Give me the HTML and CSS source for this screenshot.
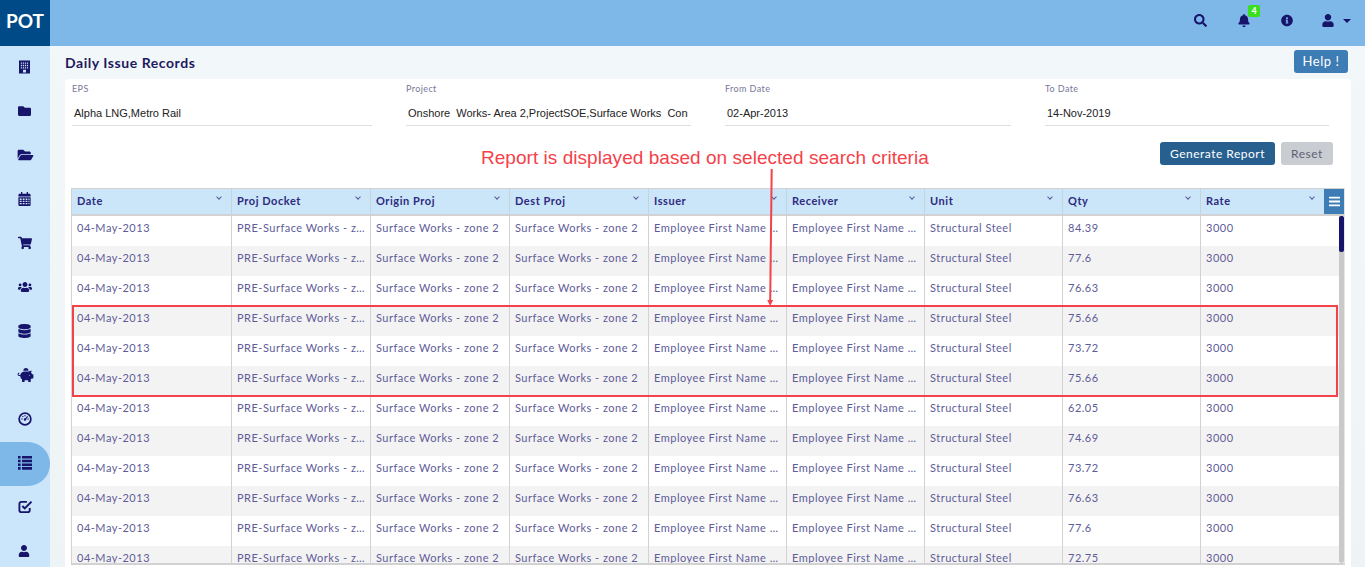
FILE: index.html
```html
<!DOCTYPE html>
<html lang="en">
<head>
<meta charset="utf-8">
<title>Daily Issue Records</title>
<link rel="stylesheet" href="styles.css">
</head>
<body>
<div class="app">
  <aside class="sidebar">
    <div class="logo">POT</div>
    <nav class="nav">
      <a class="nav-item"><svg class="ico ico-building" viewBox="0 0 12 14"><path fill-rule="evenodd" d="M0 0h12v14H0zM2 2v1.5h1.3V2zm2.2 0v1.5h1.3V2zm2.2 0v1.5h1.3V2zm2.2 0v1.5H10V2zM2 4.6v1.5h1.3V4.6zm2.2 0v1.5h1.3V4.6zm2.2 0v1.5h1.3V4.6zm2.2 0v1.5H10V4.6zM2 7.2v1.5h1.3V7.2zm2.2 0v1.5h1.3V7.2zm2.2 0v1.5h1.3V7.2zm2.2 0v1.5H10V7.2zM4.4 10v3h3.2v-3z"/></svg></a>
      <a class="nav-item"><svg class="ico" viewBox="0 0 512 512"><path d="M464 128H272l-64-64H48C21.49 64 0 85.49 0 112v288c0 26.51 21.49 48 48 48h416c26.51 0 48-21.49 48-48V176c0-26.51-21.49-48-48-48z"/></svg></a>
      <a class="nav-item"><svg class="ico ico-wide" viewBox="0 0 576 512"><path d="M572.694 292.093L500.27 416.248A63.997 63.997 0 0 1 444.989 448H45.025c-18.523 0-30.064-20.093-20.731-36.093l72.424-124.155A64 64 0 0 1 152 256h399.964c18.523 0 30.064 20.093 20.73 36.093zM152 224h328v-48c0-26.51-21.49-48-48-48H272l-64-64H48C21.49 64 0 85.49 0 112v278.046l69.077-118.418C86.214 242.25 117.989 224 152 224z"/></svg></a>
      <a class="nav-item"><svg class="ico" viewBox="0 0 448 512"><path fill-rule="evenodd" d="M96 0h48v64h160V0h48v64h48c26 0 48 22 48 48v48H0v-48c0-26 22-48 48-48h48zM0 192h448v272c0 26-22 48-48 48H48c-26 0-48-22-48-48zm48 48v48h72v-48zm112 0v48h64v-48zm104 0v48h64v-48zm104 0v48h40v-48zM48 320v48h72v-48zm112 0v48h64v-48zm104 0v48h64v-48zm104 0v48h40v-48zM48 400v48h72v-48zm112 0v48h64v-48zm104 0v48h64v-48zm104 0v48h40v-48z"/></svg></a>
      <a class="nav-item"><svg class="ico ico-14" viewBox="0 0 576 512"><path d="M528.12 301.319l47.273-208C578.806 78.301 567.391 64 551.99 64H159.208l-9.166-44.81C147.758 8.021 137.93 0 126.529 0H24C10.745 0 0 10.745 0 24v16c0 13.255 10.745 24 24 24h69.883l70.248 343.435C147.325 417.1 136 435.222 136 456c0 30.928 25.072 56 56 56s56-25.072 56-56c0-15.674-6.447-29.835-16.824-40h209.647C430.447 426.165 424 440.326 424 456c0 30.928 25.072 56 56 56s56-25.072 56-56c0-22.172-12.888-41.332-31.579-50.405l5.517-24.276c3.413-15.018-8.002-29.319-23.403-29.319H218.117l-6.545-32h293.145c11.206 0 20.92-7.754 23.403-18.681z"/></svg></a>
      <a class="nav-item"><svg class="ico ico-14" viewBox="0 0 640 512"><path d="M96 224c35.3 0 64-28.7 64-64s-28.7-64-64-64-64 28.7-64 64 28.7 64 64 64zm448 0c35.3 0 64-28.7 64-64s-28.7-64-64-64-64 28.7-64 64 28.7 64 64 64zm32 32h-64c-17.6 0-33.5 7.1-45.1 18.6 40.3 22.1 68.9 62 75.1 109.4h66c17.7 0 32-14.3 32-32v-32c0-35.3-28.7-64-64-64zm-256 0c61.9 0 112-50.1 112-112S381.9 32 320 32 208 82.1 208 144s50.1 112 112 112zm76.8 32h-8.3c-20.8 10-43.9 16-68.5 16s-47.6-6-68.5-16h-8.3C179.6 288 128 339.6 128 403.2V432c0 26.5 21.5 48 48 48h288c26.5 0 48-21.5 48-48v-28.8c0-63.6-51.6-115.2-115.2-115.2zm-223.7-13.4C161.5 263.1 145.6 256 128 256H64c-35.3 0-64 28.7-64 64v32c0 17.7 14.3 32 32 32h65.9c6.3-47.4 34.9-87.3 75.2-109.4z"/></svg></a>
      <a class="nav-item"><svg class="ico" viewBox="0 0 448 512"><path d="M448 73.143v45.714C448 159.143 347.667 192 224 192S0 159.143 0 118.857V73.143C0 32.857 100.333 0 224 0s224 32.857 224 73.143zM448 176v102.857C448 319.143 347.667 352 224 352S0 319.143 0 278.857V176c48.125 33.143 136.208 48.572 224 48.572S399.874 209.143 448 176zm0 160v102.857C448 479.143 347.667 512 224 512S0 479.143 0 438.857V336c48.125 33.143 136.208 48.572 224 48.572S399.874 369.143 448 336z"/></svg></a>
      <a class="nav-item"><svg class="ico ico-wide" viewBox="0 0 576 512"><path d="M560 224h-29.5c-8.8-20-21.6-37.7-37.4-52.5L512 96h-32c-29.4 0-55.4 13.5-73 34.3-7.6-1.1-15.1-2.3-23-2.3H256c-77.4 0-141.9 55-156.8 128H56c-14.8 0-26.5-13.5-23.5-28.8C34.7 215.8 45.4 208 57 208h1c3.3 0 6-2.7 6-6v-20c0-3.3-2.7-6-6-6-28.5 0-53.9 20.4-57.5 48.6C-3.9 258.8 22.7 288 56 288h40c0 52.2 25.4 98.1 64 127.3V496c0 8.8 7.2 16 16 16h64c8.8 0 16-7.2 16-16v-48h128v48c0 8.8 7.2 16 16 16h64c8.8 0 16-7.2 16-16v-80.7c11.8-8.9 22.3-19.4 31.3-31.3H560c8.8 0 16-7.2 16-16V240c0-8.8-7.2-16-16-16zm-128 64c-8.8 0-16-7.2-16-16s7.2-16 16-16 16 7.2 16 16-7.2 16-16 16zM256 96h128c5.4 0 10.7.4 15.9.8 0-.3.1-.5.1-.8 0-53-43-96-96-96s-96 43-96 96c0 2.1.5 4.1.6 6.2 15.2-3.9 31-6.2 47.4-6.2z"/></svg></a>
      <a class="nav-item"><svg class="ico ico-14" viewBox="0 0 16 16"><circle cx="8" cy="8" r="6.7" fill="none" stroke="currentColor" stroke-width="2"/><path d="M8 8.6L11 5" stroke="currentColor" stroke-width="1.4" fill="none"/><circle cx="8" cy="8.6" r="1.4"/><circle cx="4.5" cy="8" r=".8"/><circle cx="5.5" cy="5.2" r=".8"/><circle cx="8" cy="4.2" r=".8"/><circle cx="11.5" cy="8" r=".8"/></svg></a>
      <a class="nav-item nav-item-active"><svg class="ico ico-14" viewBox="0 0 14 14"><path d="M0 0h2.6v2.6H0zM4 0h10v2.6H4zM0 3.7h2.6v2.6H0zM4 3.7h10v2.6H4zM0 7.4h2.6V10H0zM4 7.4h10V10H4zM0 11.1h2.6v2.6H0zM4 11.1h10v2.6H4z"/></svg></a>
      <a class="nav-item"><svg class="ico ico-15" viewBox="0 0 16 16"><path d="M12.5 9.5V12a2 2 0 0 1-2 2H3.5a2 2 0 0 1-2-2V5a2 2 0 0 1 2-2h6" fill="none" stroke="currentColor" stroke-width="2"/><path d="M4.6 7.4L7.2 10 14.4 2.8" fill="none" stroke="currentColor" stroke-width="2.2"/></svg></a>
      <a class="nav-item"><svg class="ico ico-small" viewBox="0 0 448 512"><path d="M224 256c70.7 0 128-57.3 128-128S294.7 0 224 0 96 57.3 96 128s57.3 128 128 128zm89.6 32h-16.7c-22.2 10.2-46.9 16-72.9 16s-50.6-5.8-72.9-16h-16.7C60.2 288 0 348.2 0 422.4V464c0 26.5 21.5 48 48 48h352c26.5 0 48-21.5 48-48v-41.6c0-74.2-60.2-134.4-134.4-134.4z"/></svg></a>
    </nav>
  </aside>

  <div class="main">
    <header class="topbar">
      <span class="top-icon top-search"><svg class="ico" viewBox="0 0 512 512"><path d="M505 442.7L405.3 343c-4.5-4.5-10.6-7-17-7H372c27.6-35.3 44-79.7 44-128C416 93.1 322.9 0 208 0S0 93.1 0 208s93.1 208 208 208c48.3 0 92.7-16.4 128-44v16.3c0 6.4 2.5 12.5 7 17l99.7 99.7c9.4 9.4 24.6 9.4 33.9 0l28.3-28.3c9.4-9.4 9.4-24.6.1-34zM208 336c-70.7 0-128-57.2-128-128 0-70.7 57.2-128 128-128 70.7 0 128 57.2 128 128 0 70.7-57.2 128-128 128z"/></svg></span>
      <span class="top-icon top-bell"><svg class="ico" viewBox="0 0 448 512"><path d="M224 512c35.32 0 63.97-28.65 63.97-64H160.03c0 35.35 28.65 64 63.97 64zm215.39-149.71c-19.32-20.76-55.47-51.99-55.47-154.29 0-77.7-54.48-139.9-127.94-155.16V32c0-17.67-14.32-32-31.98-32s-31.98 14.33-31.98 32v20.84C118.56 68.1 64.08 130.3 64.08 208c0 102.3-36.15 133.53-55.47 154.29-6 6.45-8.66 14.16-8.61 21.71.11 16.4 12.98 32 32.1 32h383.8c19.12 0 32-15.6 32.1-32 .05-7.55-2.61-15.27-8.61-21.71z"/></svg><span class="badge">4</span></span>
      <span class="top-icon top-info"><svg class="ico" viewBox="0 0 512 512"><path d="M256 8C119.043 8 8 119.083 8 256c0 136.997 111.043 248 248 248s248-111.003 248-248C504 119.083 392.957 8 256 8zm0 110c23.196 0 42 18.804 42 42s-18.804 42-42 42-42-18.804-42-42 18.804-42 42-42zm56 254c0 6.627-5.373 12-12 12h-88c-6.627 0-12-5.373-12-12v-24c0-6.627 5.373-12 12-12h12v-64h-12c-6.627 0-12-5.373-12-12v-24c0-6.627 5.373-12 12-12h64c6.627 0 12 5.373 12 12v100h12c6.627 0 12 5.373 12 12v24z"/></svg></span>
      <span class="top-icon top-user"><svg class="ico" viewBox="0 0 448 512"><path d="M224 256c70.7 0 128-57.3 128-128S294.7 0 224 0 96 57.3 96 128s57.3 128 128 128zm89.6 32h-16.7c-22.2 10.2-46.9 16-72.9 16s-50.6-5.8-72.9-16h-16.7C60.2 288 0 348.2 0 422.4V464c0 26.5 21.5 48 48 48h352c26.5 0 48-21.5 48-48v-41.6c0-74.2-60.2-134.4-134.4-134.4z"/></svg><svg class="caret" viewBox="0 0 8 4"><path d="M0 0h8L4 4z"/></svg></span>
    </header>

    <main class="content">
      <div class="page-head">
        <h1 class="page-title">Daily Issue Records</h1>
        <button class="btn btn-help">Help !</button>
      </div>

      <section class="card">
        <div class="filters">
          <div class="field"><div class="field-label">EPS</div><div class="field-value">Alpha LNG,Metro Rail</div></div>
          <div class="field"><div class="field-label">Project</div><div class="field-value">Onshore&nbsp; Works- Area 2,ProjectSOE,Surface Works&nbsp; Construction</div></div>
          <div class="field"><div class="field-label">From Date</div><div class="field-value">02-Apr-2013</div></div>
          <div class="field"><div class="field-label">To Date</div><div class="field-value">14-Nov-2019</div></div>
        </div>
        <div class="actions">
          <button class="btn btn-primary">Generate Report</button>
          <button class="btn btn-reset">Reset</button>
        </div>

        <div class="grid">
          <div class="grid-head">
            <div class="hcell">Date<i class="chev"></i></div>
            <div class="hcell">Proj Docket<i class="chev"></i></div>
            <div class="hcell">Origin Proj<i class="chev"></i></div>
            <div class="hcell">Dest Proj<i class="chev"></i></div>
            <div class="hcell">Issuer<i class="chev"></i></div>
            <div class="hcell">Receiver<i class="chev"></i></div>
            <div class="hcell">Unit<i class="chev"></i></div>
            <div class="hcell">Qty<i class="chev"></i></div>
            <div class="hcell hcell-last">Rate<i class="chev"></i></div>
            <div class="grid-menu"><svg viewBox="0 0 448 512"><path d="M16 132h416c8.837 0 16-7.163 16-16V76c0-8.837-7.163-16-16-16H16C7.163 60 0 67.163 0 76v40c0 8.837 7.163 16 16 16zm0 160h416c8.837 0 16-7.163 16-16v-40c0-8.837-7.163-16-16-16H16c-8.837 0-16 7.163-16 16v40c0 8.837 7.163 16 16 16zm0 160h416c8.837 0 16-7.163 16-16v-40c0-8.837-7.163-16-16-16H16c-8.837 0-16 7.163-16 16v40c0 8.837 7.163 16 16 16z"/></svg></div>
          </div>
          <div class="grid-body">
            <div class="rows">
              <div class="row"><div class="cell">04-May-2013</div><div class="cell">PRE-Surface Works - zone 2</div><div class="cell">Surface Works - zone 2</div><div class="cell">Surface Works - zone 2</div><div class="cell">Employee First Name Last</div><div class="cell">Employee First Name Last</div><div class="cell">Structural Steel</div><div class="cell">84.39</div><div class="cell">3000</div></div>
              <div class="row"><div class="cell">04-May-2013</div><div class="cell">PRE-Surface Works - zone 2</div><div class="cell">Surface Works - zone 2</div><div class="cell">Surface Works - zone 2</div><div class="cell">Employee First Name Last</div><div class="cell">Employee First Name Last</div><div class="cell">Structural Steel</div><div class="cell">77.6</div><div class="cell">3000</div></div>
              <div class="row"><div class="cell">04-May-2013</div><div class="cell">PRE-Surface Works - zone 2</div><div class="cell">Surface Works - zone 2</div><div class="cell">Surface Works - zone 2</div><div class="cell">Employee First Name Last</div><div class="cell">Employee First Name Last</div><div class="cell">Structural Steel</div><div class="cell">76.63</div><div class="cell">3000</div></div>
              <div class="row"><div class="cell">04-May-2013</div><div class="cell">PRE-Surface Works - zone 2</div><div class="cell">Surface Works - zone 2</div><div class="cell">Surface Works - zone 2</div><div class="cell">Employee First Name Last</div><div class="cell">Employee First Name Last</div><div class="cell">Structural Steel</div><div class="cell">75.66</div><div class="cell">3000</div></div>
              <div class="row"><div class="cell">04-May-2013</div><div class="cell">PRE-Surface Works - zone 2</div><div class="cell">Surface Works - zone 2</div><div class="cell">Surface Works - zone 2</div><div class="cell">Employee First Name Last</div><div class="cell">Employee First Name Last</div><div class="cell">Structural Steel</div><div class="cell">73.72</div><div class="cell">3000</div></div>
              <div class="row"><div class="cell">04-May-2013</div><div class="cell">PRE-Surface Works - zone 2</div><div class="cell">Surface Works - zone 2</div><div class="cell">Surface Works - zone 2</div><div class="cell">Employee First Name Last</div><div class="cell">Employee First Name Last</div><div class="cell">Structural Steel</div><div class="cell">75.66</div><div class="cell">3000</div></div>
              <div class="row"><div class="cell">04-May-2013</div><div class="cell">PRE-Surface Works - zone 2</div><div class="cell">Surface Works - zone 2</div><div class="cell">Surface Works - zone 2</div><div class="cell">Employee First Name Last</div><div class="cell">Employee First Name Last</div><div class="cell">Structural Steel</div><div class="cell">62.05</div><div class="cell">3000</div></div>
              <div class="row"><div class="cell">04-May-2013</div><div class="cell">PRE-Surface Works - zone 2</div><div class="cell">Surface Works - zone 2</div><div class="cell">Surface Works - zone 2</div><div class="cell">Employee First Name Last</div><div class="cell">Employee First Name Last</div><div class="cell">Structural Steel</div><div class="cell">74.69</div><div class="cell">3000</div></div>
              <div class="row"><div class="cell">04-May-2013</div><div class="cell">PRE-Surface Works - zone 2</div><div class="cell">Surface Works - zone 2</div><div class="cell">Surface Works - zone 2</div><div class="cell">Employee First Name Last</div><div class="cell">Employee First Name Last</div><div class="cell">Structural Steel</div><div class="cell">73.72</div><div class="cell">3000</div></div>
              <div class="row"><div class="cell">04-May-2013</div><div class="cell">PRE-Surface Works - zone 2</div><div class="cell">Surface Works - zone 2</div><div class="cell">Surface Works - zone 2</div><div class="cell">Employee First Name Last</div><div class="cell">Employee First Name Last</div><div class="cell">Structural Steel</div><div class="cell">76.63</div><div class="cell">3000</div></div>
              <div class="row"><div class="cell">04-May-2013</div><div class="cell">PRE-Surface Works - zone 2</div><div class="cell">Surface Works - zone 2</div><div class="cell">Surface Works - zone 2</div><div class="cell">Employee First Name Last</div><div class="cell">Employee First Name Last</div><div class="cell">Structural Steel</div><div class="cell">77.6</div><div class="cell">3000</div></div>
              <div class="row"><div class="cell">04-May-2013</div><div class="cell">PRE-Surface Works - zone 2</div><div class="cell">Surface Works - zone 2</div><div class="cell">Surface Works - zone 2</div><div class="cell">Employee First Name Last</div><div class="cell">Employee First Name Last</div><div class="cell">Structural Steel</div><div class="cell">72.75</div><div class="cell">3000</div></div>
            </div>
            <div class="scrollbar"><div class="scroll-thumb"></div></div>
          </div>
        </div>
      </section>
    </main>
  </div>

  <div class="note-text">Report is displayed based on selected search criteria</div>
  <svg class="note-arrow" viewBox="0 0 8 137"><path d="M4.7 0L3.2 131" stroke="#f4424a" stroke-width="2" fill="none"/><path d="M.2 131h6l-3 6z" fill="#f4424a"/></svg>
  <div class="note-box"></div>
</div>
</body>
</html>
```

FILE: styles.css
```css
* { box-sizing: border-box; }
html, body { margin: 0; padding: 0; height: 100%; overflow: hidden; }
body { font-family: Lato, "Liberation Sans", sans-serif; background: #f0f5f8; }
.app { position: relative; display: flex; width: 1365px; height: 567px; overflow: hidden; }

/* Sidebar */
.sidebar { flex: 0 0 50px; background: #cbe6fa; display: flex; flex-direction: column; }
.logo { flex: 0 0 46px; background: #004b87; color: #fff; font-size: 19px; font-weight: 700; display: flex; align-items: center; justify-content: center; padding-bottom: 6px; }
.nav { display: flex; flex-direction: column; }
.nav-item { flex: 0 0 44px; display: flex; align-items: center; padding-left: 18px; padding-bottom: 3px; color: #17146b; }
.nav-item-active { background: #7db8e8; border-radius: 0 22px 22px 0; }
.ico { display: block; width: 13px; height: 14px; fill: currentColor; }
.ico-wide { width: 17px; margin-left: -1px; }
.ico-14 { width: 14px; height: 14px; }
.ico-15 { width: 15px; height: 15px; }
.ico-small { width: 12px; height: 12px; }
.ico-building { width: 11px; height: 14px; margin-left: 1px; }

/* Main */
.main { flex: 1 1 auto; min-width: 0; display: flex; flex-direction: column; }
.topbar { flex: 0 0 46px; background: #7db8e8; display: flex; align-items: center; justify-content: flex-end; padding: 0 14px 5px 0; color: #17146b; }
.top-icon { position: relative; display: flex; align-items: center; }
.top-icon .ico { width: 12px; height: 13px; }
.top-search { margin-right: 31px; }
.top-search .ico { width: 13px; }
.top-bell { margin-right: 31px; }
.top-info { margin-right: 29px; }
.top-user { gap: 9px; }
.caret { width: 8px; height: 4px; fill: currentColor; }
.badge { position: absolute; left: 10px; top: -9px; width: 12px; height: 12px; border-radius: 2px; background: #38e01e; color: #fff; font-size: 9px; font-weight: 700; line-height: 12px; text-align: center; }

.content { flex: 1 1 auto; min-height: 0; padding: 4px 14px 0 15px; background: linear-gradient(#f2f7fa, #eef3f6); display: flex; flex-direction: column; }
.page-head { flex: 0 0 29px; display: flex; align-items: flex-start; justify-content: space-between; padding-right: 3px; }
.page-title { margin: 4px 0 0; font-size: 14px; line-height: 17px; font-weight: 700; color: #1f1a5e; letter-spacing: .55px; }

/* Buttons */
.btn { border: 0; border-radius: 3px; font-family: Lato, "Liberation Sans", sans-serif; font-size: 12px; line-height: 23px; height: 23px; padding: 0; letter-spacing: .5px; }
.btn-help { width: 54px; background: #3d7cb5; color: #fff; font-size: 13px; }
.btn-primary { width: 115px; background: #27608f; color: #fff; }
.btn-reset { width: 52px; background: #c9ccd1; color: #5f6175; }

/* Card */
.card { flex: 1 1 auto; min-height: 0; background: #fff; border-radius: 4px 4px 0 0; padding: 0 6px 0 6px; display: flex; flex-direction: column; }
.filters { display: grid; grid-template-columns: 334px 319px 320px 284px; padding: 4px 0 0 1px; }
.field { height: 43px; margin-right: 34px; border-bottom: 1px solid #dfdfdf; }
.field:last-child { margin-right: 0; }
.field-label { font-size: 9px; line-height: 12px; color: #77779b; letter-spacing: .4px; }
.field-value { margin: 12px 3px 0 0; padding: 0 0 0 2px; font-family: "Liberation Sans", sans-serif; font-size: 11px; line-height: 13px; color: #222; white-space: nowrap; overflow: hidden; }
.actions { display: flex; justify-content: flex-end; gap: 6px; padding: 16px 12px 0 0; flex: 0 0 62px; }

/* Data grid */
.grid { flex: 0 0 auto; height: 377px; border: 1px solid #d2d2d2; border-bottom-width: 2px; border-right-color: #e6e6e6; display: flex; flex-direction: column; overflow: hidden; }
.grid-head { flex: 0 0 27px; display: grid; grid-template-columns: 160px 139px 139px 139px 138px 138px 138px 138px 123px 20px; background: #cbe5f9; border-bottom: 2px solid #d2d2d2; }
.hcell { position: relative; padding: 4px 0 0 5px; font-size: 11px; line-height: 16px; font-weight: 700; color: #2e2a80; letter-spacing: .55px; border-right: 1px solid #c7d3dc; }
.hcell-last { border-right: 0; }
.chev { position: absolute; right: 10px; top: 6px; width: 4px; height: 4px; border-right: 1px solid #5a5a9c; border-bottom: 1px solid #5a5a9c; transform: rotate(45deg); }
.grid-menu { background: #3d7cb5; display: flex; align-items: center; justify-content: center; }
.grid-menu svg { width: 11px; height: 13px; fill: #fff; }
.grid-body { flex: 1 1 auto; min-height: 0; display: flex; overflow: hidden; }
.rows { flex: 1 1 auto; min-width: 0; }
.row { height: 30px; display: grid; grid-template-columns: 160px 139px 139px 139px 138px 138px 138px 138px 1fr; }
.row:nth-child(even) { background: #f3f3f3; }
.cell { padding: 4px 3px 0 5px; font-size: 11px; line-height: 15px; color: #5e5c98; letter-spacing: .5px; white-space: nowrap; overflow: hidden; text-overflow: ellipsis; border-right: 1px solid #d2d2d2; }
.cell:last-child { border-right: 0; }
.scrollbar { flex: 0 0 5px; background: #c9c9c9; border-radius: 2px; }
.scroll-thumb { height: 36px; background: #17146b; border-radius: 2px; }

/* Annotation laid over the screenshot */
.note-text { position: absolute; left: 481px; top: 147px; font-family: "Liberation Sans", sans-serif; font-size: 19px; line-height: 21px; letter-spacing: .04px; color: #f4424a; white-space: nowrap; }
.note-arrow { position: absolute; left: 767px; top: 169px; width: 8px; height: 137px; }
.note-box { position: absolute; left: 72px; top: 305px; width: 1266px; height: 92px; border: 2px solid #f4424a; }
```
